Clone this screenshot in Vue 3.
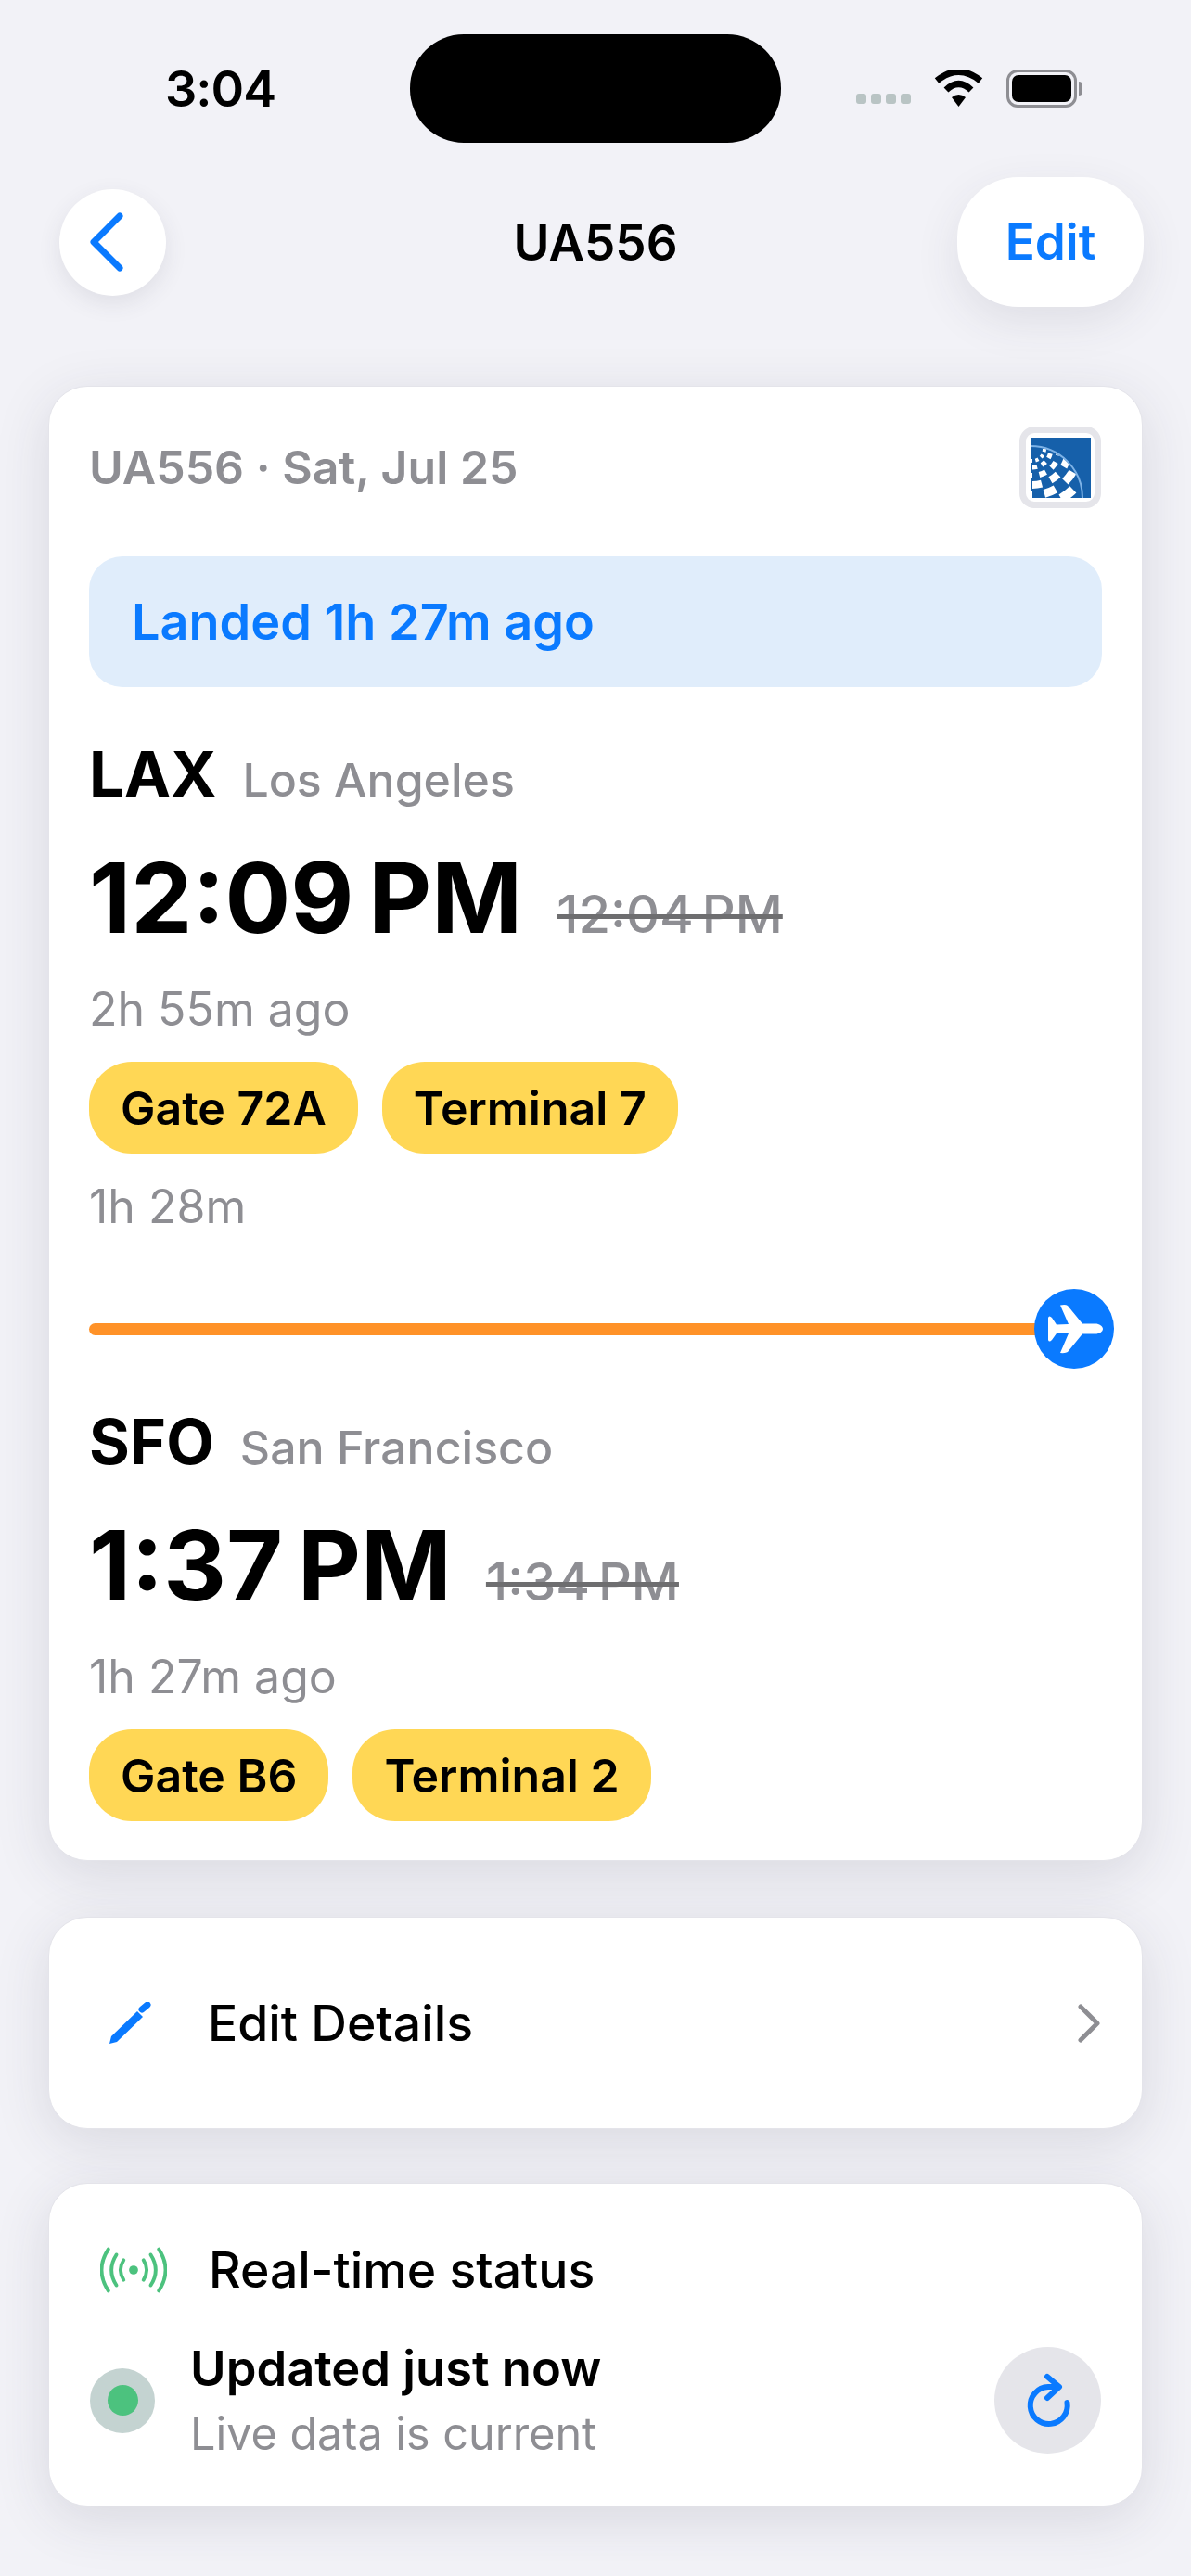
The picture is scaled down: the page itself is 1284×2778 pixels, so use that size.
<script setup>
const legs = [
  { code: 'LAX', city: 'Los Angeles', time: '12:09 PM', old: '12:04 PM', ago: '2h 55m ago', pills: ['Gate 72A', 'Terminal 7'] },
  { code: 'SFO', city: 'San Francisco', time: '1:37 PM', old: '1:34 PM', ago: '1h 27m ago', pills: ['Gate B6', 'Terminal 2'] }
]
// rings of the globe in the airline logo
const rings = [
  { r: 13, w: 4, off: 0 },
  { r: 20, w: 5, off: 2 },
  { r: 29, w: 6, off: 0 },
  { r: 39, w: 8, off: 2 },
  { r: 50, w: 9, off: 0 },
  { r: 62, w: 10, off: 2 }
]
</script>

<template>
  <div class="page">
    <div class="status">
      <div class="clock">3:04</div>
      <div class="island"></div>
      <div class="indicators">
        <div class="cell">
          <i></i><i></i><i></i><i></i>
        </div>
        <svg class="wifi" width="53" height="40" viewBox="0 0 53 40">
          <path d="M26.5 40 L19 30 Q26.5 24 34 30 Z" fill="#000" />
          <path d="M13 22 Q26.5 9 40 22" fill="none" stroke="#000" stroke-width="7" />
          <path d="M3 12 Q26.5 -7 50 12" fill="none" stroke="#000" stroke-width="7" />
        </svg>
        <div class="battery"><span></span></div>
      </div>
    </div>

    <div class="nav">
      <div class="nav-left">
        <div class="back">
          <svg width="40" height="64" viewBox="0 0 40 64">
            <path d="M34 4 L6 32 L34 60" fill="none" stroke="#0a7aff" stroke-width="7" stroke-linecap="round" stroke-linejoin="round" />
          </svg>
        </div>
      </div>
      <div class="title">UA556</div>
      <div class="nav-right">
        <div class="edit">Edit</div>
      </div>
    </div>

    <div class="card flight">
      <div class="flight-head">
        <span class="flight-name">UA556 · Sat, Jul 25</span>
        <div class="logo">
          <svg width="65" height="65" viewBox="0 0 65 65">
            <defs>
              <clipPath id="globe">
                <circle cx="0" cy="65" r="55" />
              </clipPath>
            </defs>
            <rect width="65" height="65" fill="#1660aa" />
            <circle cx="0" cy="65" r="56" fill="none" stroke="#7db2e6" stroke-width="2" />
            <g clip-path="url(#globe)" fill="none" stroke="#fff">
              <circle
                v-for="ring in rings"
                :key="ring.r"
                cx="2"
                cy="12"
                :r="ring.r"
                :stroke-width="ring.w"
                pathLength="48"
                stroke-dasharray="2 2"
                :stroke-dashoffset="ring.off"
              />
            </g>
          </svg>
        </div>
      </div>
      <div class="landed">Landed 1h 27m ago</div>

      <template v-for="(leg, i) in legs" :key="leg.code">
        <div class="place" :class="{ second: i === 1 }">
          <span class="code">{{ leg.code }}</span>
          <span class="city">{{ leg.city }}</span>
        </div>
        <div class="times">
          <span class="time">{{ leg.time }}</span>
          <span class="old">{{ leg.old }}</span>
        </div>
        <div class="ago">{{ leg.ago }}</div>
        <div class="pills">
          <span v-for="p in leg.pills" :key="p" class="pill">{{ p }}</span>
        </div>
        <template v-if="i === 0">
          <div class="duration">1h 28m</div>
          <div class="track">
            <div class="plane">
              <svg width="86" height="86" viewBox="0 0 86 86">
                <path fill="#fff" d="M74 43 C74 40 70 37.5 66 37.5 L52 37.5 L36 18 Q34 16.5 28 17.5 L37 38 L24 38.5 L19 31 Q16 28 15 31 L15 55 Q16 58 19 55 L24 48 L37 48 L28 69 Q34 69.5 36 68 L52 48.5 L66 48.5 C70 48.5 74 46 74 43 Z" />
              </svg>
            </div>
          </div>
        </template>
      </template>
    </div>

    <div class="card details">
      <svg class="pencil" width="46" height="46" viewBox="0 0 46 46">
        <path d="M1 45 L3 37 L31 10 L37 16 L9 43 Z" fill="#0a7aff" />
        <path d="M36 8 L42 3" stroke="#0a7aff" stroke-width="7" stroke-linecap="round" />
      </svg>
      <span class="row-label">Edit Details</span>
      <svg class="chevron" width="24" height="42" viewBox="0 0 24 42">
        <path d="M3 3 L21 21 L3 39" fill="none" stroke="#8e8e93" stroke-width="5" stroke-linecap="round" stroke-linejoin="round" />
      </svg>
    </div>

    <div class="card realtime">
      <div class="rt-head">
        <svg class="signal" width="72" height="50" viewBox="0 0 74 50">
          <circle cx="37" cy="25" r="5" fill="#4cc27e" />
          <g fill="none" stroke="#4cc27e" stroke-width="4" stroke-linecap="round">
            <path d="M26 14 Q19 25 26 36" />
            <path d="M48 14 Q55 25 48 36" />
            <path d="M18 8 Q7 25 18 42" />
            <path d="M56 8 Q67 25 56 42" />
            <path d="M9 2 Q-6 25 9 48" />
            <path d="M65 2 Q80 25 65 48" />
          </g>
        </svg>
        <span class="row-label">Real-time status</span>
      </div>
      <div class="rt-body">
        <div class="halo"><span></span></div>
        <div class="rt-text">
          <div class="updated">Updated just now</div>
          <div class="live">Live data is current</div>
        </div>
        <div class="refresh">
          <svg width="50" height="60" viewBox="0 0 50 60">
            <path d="M36 15 H25 A20 20 0 1 0 45.5 32" fill="none" stroke="#0a7aff" stroke-width="6" stroke-linecap="round" />
            <path d="M24 4 L37 15 L24 27" fill="none" stroke="#0a7aff" stroke-width="6" stroke-linecap="round" stroke-linejoin="round" />
          </svg>
        </div>
      </div>
    </div>
  </div>
</template>

<style>
html,
body {
  background: #f2f2f7;
}
</style>

<style scoped>
.page {
  width: 1284px;
  height: 2778px;
  overflow: hidden;
  background: #f2f2f7;
  font-family: Inter, "Liberation Sans", sans-serif;
  color: #000;
}

.status {
  display: grid;
  grid-template-columns: 1fr 400px 1fr;
  align-items: center;
  padding-top: 37px;
}
.clock {
  padding-left: 178px;
  font-size: 54px;
  font-weight: 600;
  letter-spacing: -1px;
}
.island {
  height: 117px;
  background: #000;
  border-radius: 58px;
}
.indicators {
  display: flex;
  align-items: center;
  justify-content: flex-end;
  padding-right: 123px;
  gap: 25px;
}
.cell {
  display: flex;
  gap: 5px;
  padding-top: 22px;
}
.cell i {
  width: 11px;
  height: 11px;
  border-radius: 3px;
  background: #b9c4c4;
}
.wifi {
  display: block;
  margin-top: -1px;
}
.battery {
  width: 76px;
  height: 41px;
  box-sizing: border-box;
  border: 3px solid #8e8e93;
  border-radius: 12px;
  padding: 3px;
  position: relative;
}
.battery span {
  display: block;
  height: 100%;
  background: #000;
  border-radius: 7px;
}
.battery::after {
  content: "";
  position: absolute;
  right: -9px;
  top: 10px;
  width: 4px;
  height: 15px;
  border-radius: 0 4px 4px 0;
  background: #8e8e93;
}

.nav {
  display: grid;
  grid-template-columns: 1fr auto 1fr;
  align-items: center;
  margin-top: 37px;
  padding: 0 51px;
  height: 140px;
}
.nav-left {
  padding-left: 13px;
}
.nav-right {
  display: flex;
  justify-content: flex-end;
}
.back {
  width: 115px;
  height: 115px;
  border-radius: 50%;
  background: #fff;
  display: flex;
  align-items: center;
  justify-content: center;
  box-shadow: 0 8px 24px rgba(60, 60, 80, 0.1);
}
.back svg {
  margin-left: -14px;
}
.title {
  font-size: 53px;
  font-weight: 600;
  padding-top: 2px;
}
.edit {
  width: 201px;
  height: 140px;
  border-radius: 66px;
  background: #fff;
  color: #0a7aff;
  font-size: 53px;
  font-weight: 600;
  display: flex;
  align-items: center;
  justify-content: center;
  box-shadow: 0 16px 48px rgba(60, 60, 80, 0.1);
}

.card {
  margin: 0 52px;
  box-sizing: border-box;
  background: #fff;
  border: 1px solid #e4e4ea;
  border-radius: 42px;
  box-shadow: 0 14px 60px rgba(50, 50, 70, 0.13);
}

.flight {
  margin-top: 85px;
  height: 1591px;
  padding: 43px 43px 0;
}
.flight-head {
  display: flex;
  align-items: center;
  justify-content: space-between;
  padding-right: 1px;
}
.flight-name {
  font-size: 50px;
  font-weight: 600;
  color: #8e8e93;
}
.logo {
  width: 88px;
  height: 88px;
  box-sizing: border-box;
  border: 7px solid #e5e5ea;
  border-radius: 16px;
  background: #fff;
  display: flex;
  align-items: center;
  justify-content: center;
}
.landed {
  margin-top: 52px;
  height: 141px;
  border-radius: 36px;
  background: #e0edfb;
  color: #0a7aff;
  font-size: 54px;
  font-weight: 600;
  display: flex;
  align-items: center;
  padding-left: 46px;
}

.place {
  margin-top: 54px;
  height: 80px;
  display: flex;
  align-items: baseline;
  gap: 28px;
}
.place.second {
  margin-top: 75px;
}
.code {
  font-size: 67px;
  font-weight: 700;
  line-height: 80px;
}
.city {
  font-size: 50px;
  font-weight: 500;
  color: #8e8e93;
}
.times {
  margin-top: 28px;
  display: flex;
  align-items: baseline;
  gap: 37px;
}
.time {
  font-size: 105px;
  font-weight: 700;
  line-height: 130px;
  word-spacing: -9px;
}
.old {
  font-size: 56px;
  font-weight: 500;
  color: #8e8e93;
  text-decoration: line-through;
  text-decoration-color: #6e6e70;
  text-decoration-thickness: 5px;
  word-spacing: -6px;
}
.ago {
  margin-top: 26px;
  font-size: 50px;
  line-height: 58px;
  color: #8e8e93;
}
.pills {
  margin-top: 28px;
  display: flex;
  gap: 26px;
}
.pill {
  height: 99px;
  border-radius: 46px;
  background: #ffd755;
  padding: 0 34px;
  display: flex;
  align-items: center;
  font-size: 50px;
  font-weight: 600;
}
.duration {
  margin-top: 28px;
  font-size: 50px;
  line-height: 58px;
  color: #8e8e93;
}
.track {
  margin-top: 97px;
  height: 13px;
  background: #ff9228;
  border-radius: 7px;
  position: relative;
}
.plane {
  position: absolute;
  right: -13px;
  top: -37px;
  width: 86px;
  height: 86px;
  border-radius: 50%;
  background: #0a7aff;
}

.details {
  margin-top: 60px;
  height: 229px;
  display: flex;
  align-items: center;
  padding: 0 45px 0 64px;
}
.row-label {
  font-size: 53.5px;
  font-weight: 550;
  margin-left: 61px;
}
.chevron {
  margin-left: auto;
}

.realtime {
  margin-top: 58px;
  height: 349px;
  padding: 0 44px;
}
.rt-head {
  display: flex;
  align-items: center;
  padding: 60px 0 0 11px;
}
.rt-head .row-label {
  margin-left: 45px;
}
.rt-body {
  margin-top: 43px;
  display: flex;
  align-items: center;
}
.halo {
  width: 70px;
  height: 70px;
  border-radius: 50%;
  background: #c4d3d1;
  display: flex;
  align-items: center;
  justify-content: center;
}
.halo span {
  width: 33px;
  height: 33px;
  border-radius: 50%;
  background: #4cc27e;
}
.rt-text {
  margin-left: 38px;
}
.updated {
  font-size: 52.5px;
  font-weight: 600;
  line-height: 62px;
}
.live {
  margin-top: 11px;
  font-size: 48.5px;
  line-height: 58px;
  color: #8e8e93;
}
.refresh {
  margin-left: auto;
  width: 115px;
  height: 115px;
  border-radius: 50%;
  background: #e5e5ea;
  display: flex;
  align-items: center;
  justify-content: center;
}
</style>
